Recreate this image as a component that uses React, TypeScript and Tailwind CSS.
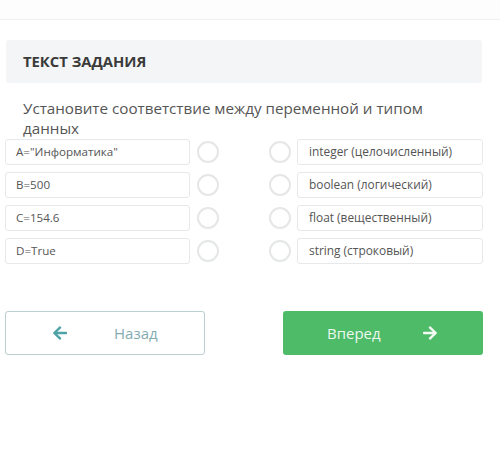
import { FaArrowLeft, FaArrowRight } from "react-icons/fa";

const rows = [
  ["A=\"Информатика\"", "integer (целочисленный)"],
  ["B=500", "boolean (логический)"],
  ["C=154.6", "float (вещественный)"],
  ["D=True", "string (строковый)"],
];

export default function App() {
  return (
    <div className="w-[500px] h-[454px] bg-white overflow-hidden" style={{ fontFamily: '"Open Sans", sans-serif' }}>
      <div className="h-[20px] border-b border-[#eef0f2] bg-[#fdfdfd]" />
      <div className="mt-[20px] ml-[6px] w-[476px] h-[43px] bg-[#f4f5f7] rounded-[3px] flex items-center pl-[17px]">
        <span className="text-[14.8px] font-bold text-[#3a3a3a]">ТЕКСТ ЗАДАНИЯ</span>
      </div>
      <p className="mt-[15px] ml-[23px] w-[410px] text-[15.2px] leading-[20px] text-[#555]">
        Установите соответствие между переменной и типом данных
      </p>
      <div className="mt-[1px] flex flex-col gap-[7px]">
        {rows.map(([l, r]) => (
          <div key={l} className="flex items-center">
            <div className="ml-[5px] w-[185px] h-[26px] border border-[#e6e8ea] rounded-[3px] flex items-center pl-[10px] text-[11.6px] text-[#555]">
              {l}
            </div>
            <div className="ml-[7px] w-[22px] h-[22px] rounded-full border-2 border-[#e4e6e8]" />
            <div className="ml-[50px] w-[22px] h-[22px] rounded-full border-2 border-[#e4e6e8]" />
            <div className="ml-[6px] w-[186px] h-[26px] border border-[#e6e8ea] rounded-[3px] flex items-center pl-[11px] text-[11.9px] text-[#555]">
              {r}
            </div>
          </div>
        ))}
      </div>
      <div className="mt-[47px] flex">
        <button className="ml-[5px] w-[200px] h-[44px] border border-[#bcd0d3] rounded-[3px] flex items-center pl-[46px] bg-white">
          <FaArrowLeft className="w-[16px] h-[16px] text-[#4fa2a5]" />
          <span className="ml-[46px] text-[15px] text-[#83acb0]">Назад</span>
        </button>
        <button className="ml-[78px] w-[200px] h-[44px] rounded-[3px] bg-[#4dbb68] flex items-center pl-[44px]">
          <span className="text-[15px] text-[#eef8f0]">Вперед</span>
          <FaArrowRight className="ml-[41px] w-[16px] h-[16px] text-[#f4fbf5]" />
        </button>
      </div>
    </div>
  );
}
